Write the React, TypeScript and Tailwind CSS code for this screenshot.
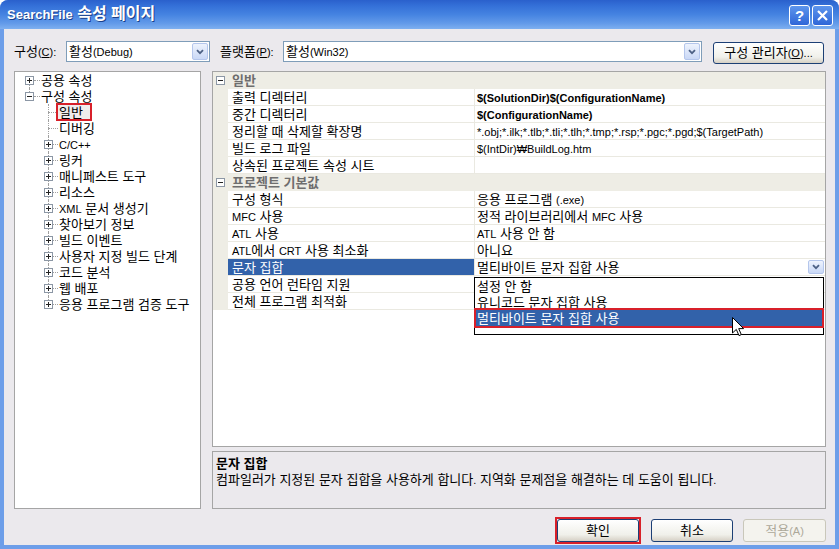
import React from 'react';

const FONT = "font-['Liberation_Sans','Noto_Sans_CJK_KR',sans-serif]";

function T({ t, ko = 'text-[13px]', la = 'text-[11px]' }: { t: string; ko?: string; la?: string }) {
  const parts = t.split(/([\uAC00-\uD7A3 ]+)/).filter((p) => p.length > 0);
  return (
    <>
      {parts.map((p, i) =>
        /[\uAC00-\uD7A3]/.test(p) ? (
          <span key={i} className={ko}>
            {p}
          </span>
        ) : (
          <span key={i} className={la}>
            {p}
          </span>
        )
      )}
    </>
  );
}

function ExpBox({ minus }: { minus?: boolean }) {
  return (
    <svg width="9" height="9" viewBox="0 0 9 9" className="block shrink-0">
      <rect x="0.5" y="0.5" width="8" height="8" fill="#fff" stroke="#8c97a5" />
      <path d="M2 4.5h5" stroke="#222" />
      {!minus && <path d="M4.5 2v5" stroke="#222" />}
    </svg>
  );
}

function Chevron() {
  return (
    <svg width="8" height="6" viewBox="0 0 8 6" className="block">
      <path d="M1 1.2 L4 4.2 L7 1.2" fill="none" stroke="#4d6185" strokeWidth="1.8" />
    </svg>
  );
}

function DropBtn({ w = 16, h = 19 }: { w?: number; h?: number }) {
  return (
    <div
      className="flex items-center justify-center rounded-[2px] border border-[#b4c6ec] bg-[linear-gradient(to_bottom,#eef3fd,#c9d8f6)] shrink-0"
      style={{ width: w, height: h }}
    >
      <Chevron />
    </div>
  );
}

type TreeItem = { label: string; level: 0 | 1; exp?: '+' | '-'; boxed?: boolean; last?: boolean };

const tree: TreeItem[] = [
  { label: '공용 속성', level: 0, exp: '+' },
  { label: '구성 속성', level: 0, exp: '-' },
  { label: '일반', level: 1, boxed: true },
  { label: '디버깅', level: 1 },
  { label: 'C/C++', level: 1, exp: '+' },
  { label: '링커', level: 1, exp: '+' },
  { label: '매니페스트 도구', level: 1, exp: '+' },
  { label: '리소스', level: 1, exp: '+' },
  { label: 'XML 문서 생성기', level: 1, exp: '+' },
  { label: '찾아보기 정보', level: 1, exp: '+' },
  { label: '빌드 이벤트', level: 1, exp: '+' },
  { label: '사용자 지정 빌드 단계', level: 1, exp: '+' },
  { label: '코드 분석', level: 1, exp: '+' },
  { label: '웹 배포', level: 1, exp: '+' },
  { label: '응용 프로그램 검증 도구', level: 1, exp: '+', last: true },
];

function TreeRow({ it, idx }: { it: TreeItem; idx: number }) {
  const lineV = 'absolute border-l border-dotted border-[#a0a0a0]';
  const lineH = 'absolute border-t border-dotted border-[#a0a0a0]';
  return (
    <div className="relative h-[16px] leading-[16px] text-black">
      {it.level === 0 && (
        <>
          {idx === 0 && <div className={`${lineV} left-[14px] top-[8px] h-[8px]`} />}
          {idx === 1 && <div className={`${lineV} left-[14px] top-0 h-[8px]`} />}
          <div className={`${lineH} left-[19px] top-[8px] w-[6px]`} />
          <div className="absolute left-[10px] top-[4px]">
            <ExpBox minus={it.exp === '-'} />
          </div>
          <span className="absolute left-[26px] top-0 whitespace-nowrap">
            <T t={it.label} />
          </span>
        </>
      )}
      {it.level === 1 && (
        <>
          <div className={`${lineV} left-[33px] top-0 ${it.last ? 'h-[8px]' : 'h-[16px]'}`} />
          <div className={`${lineH} left-[33px] top-[8px] w-[10px]`} />
          {it.exp && (
            <div className="absolute left-[29px] top-[4px]">
              <ExpBox />
            </div>
          )}
          {it.boxed ? (
            <span className="absolute left-[42px] top-0 h-[16px] w-[34px] pl-[2px] whitespace-nowrap bg-[#efecec] outline-2 outline-[#d8202a] -outline-offset-1">
              <T t={it.label} />
            </span>
          ) : (
            <span className="absolute left-[44px] top-0 whitespace-nowrap">
              <T t={it.label} />
            </span>
          )}
        </>
      )}
    </div>
  );
}

type GridRow =
  | { cat: string }
  | { name: string; value?: string; bold?: boolean; selected?: boolean };

const rows: GridRow[] = [
  { cat: '일반' },
  { name: '출력 디렉터리', value: '$(SolutionDir)$(ConfigurationName)', bold: true },
  { name: '중간 디렉터리', value: '$(ConfigurationName)', bold: true },
  { name: '정리할 때 삭제할 확장명', value: '*.obj;*.ilk;*.tlb;*.tli;*.tlh;*.tmp;*.rsp;*.pgc;*.pgd;$(TargetPath)' },
  { name: '빌드 로그 파일', value: '$(IntDir)₩BuildLog.htm' },
  { name: '상속된 프로젝트 속성 시트', value: '' },
  { cat: '프로젝트 기본값' },
  { name: '구성 형식', value: '응용 프로그램 (.exe)' },
  { name: 'MFC 사용', value: '정적 라이브러리에서 MFC 사용' },
  { name: 'ATL 사용', value: 'ATL 사용 안 함' },
  { name: 'ATL에서 CRT 사용 최소화', value: '아니요' },
  { name: '문자 집합', value: '멀티바이트 문자 집합 사용', selected: true },
  { name: '공용 언어 런타임 지원', value: '' },
  { name: '전체 프로그램 최적화', value: '' },
];

function Grid() {
  return (
    <div className="relative h-[376px] border border-[#a5a5a5] bg-white overflow-hidden">
      {rows.map((r, i) => {
        if ('cat' in r) {
          return (
            <div key={i} className="flex h-[17px] items-center bg-[#eeede5]">
              <div className="w-[15px] flex justify-center">
                <ExpBox minus />
              </div>
              <span className="ml-[4px] text-[13px] font-bold leading-[16px] text-[#6e6e6e]">{r.cat}</span>
            </div>
          );
        }
        return (
          <div key={i} className="flex h-[17px]">
            <div className="w-[15px] bg-[#eeede5]" />
            <div
              className={`w-[247px] border-r border-b border-[#eae9e1] flex items-center pl-[4px] leading-[16px] ${
                r.selected ? 'bg-[#3262aa] text-white' : 'text-black'
              }`}
            >
              <span className="whitespace-nowrap">
                <T t={r.name} />
              </span>
            </div>
            <div className="flex-1 border-b border-[#eae9e1] flex items-center pl-[2px] pr-[1px]">
              <span className={`whitespace-nowrap text-black leading-[16px] ${r.bold ? 'font-bold' : ''}`}>
                {r.value ? <T t={r.value} /> : null}
              </span>
              {r.selected && (
                <div className="ml-auto">
                  <DropBtn w={16} h={14} />
                </div>
              )}
            </div>
          </div>
        );
      })}

      {/* dropdown list */}
      <div className="absolute left-[261px] top-[205px] w-[350px] h-[58px] border border-black bg-white leading-[16px]">
        <div className="h-[16px] pl-[2px]">
          <T t="설정 안 함" />
        </div>
        <div className="h-[16px] pl-[2px]">
          <T t="유니코드 문자 집합 사용" />
        </div>
        <div className="h-[16px] pl-[2px] bg-[#3262aa] text-white">
          <T t="멀티바이트 문자 집합 사용" />
        </div>
        <div className="absolute left-[-1px] top-[30px] w-[350px] h-[20px] border-2 border-[#d8202a]" />
        <svg width="13" height="20" viewBox="0 0 13 20" className="absolute left-[257px] top-[39px]">
          <path
            d="M0.5 0.5 L0.5 16 L4.3 12.4 L7 18.6 L9.3 17.6 L6.7 11.6 L11.6 11.6 Z"
            fill="#fff"
            stroke="#000"
            strokeWidth="1"
          />
        </svg>
      </div>
    </div>
  );
}

function Btn({ label, disabled, red }: { label: string; disabled?: boolean; red?: boolean }) {
  const inner = (
    <div
      className={`flex h-[23px] items-center justify-center rounded-[3px] border leading-[16px] ${
        disabled
          ? 'w-[83px] border-[#c9c7ba] bg-[#f4f3ee] text-[#aca899]'
          : 'w-[82px] border-[#1c3f75] bg-[linear-gradient(to_bottom,#ffffff,#f0f0ea_70%,#d6d0c5)] text-black'
      }`}
    >
      <T t={label} />
    </div>
  );
  if (red) {
    return <div className="border-2 border-[#d8202a]">{inner}</div>;
  }
  return inner;
}

export default function App() {
  return (
    <div className={`${FONT} w-[839px] h-[549px] flex flex-col bg-[#6d9ee9] rounded-t-[8px] overflow-hidden`}>
      {/* Title bar */}
      <div className="h-[29px] shrink-0 flex items-center pl-[7px] pr-[6px] bg-[linear-gradient(to_bottom,#2a60cc_0%,#3470d8_20%,#4583e1_50%,#629ae9_80%,#7eb0f0_100%)]">
        <span className="text-white font-bold leading-[18px] [text-shadow:1px_1px_0_#1a3f8a] whitespace-nowrap">
          <T t="SearchFile 속성 페이지" ko="text-[16px]" la="text-[13px]" />
        </span>
        <div className="ml-auto flex gap-[2px] pt-[1px]">
          <div className="w-[21px] h-[21px] rounded-[3px] border border-white bg-[linear-gradient(to_bottom,#5d95ec,#2e66d8)] flex items-center justify-center text-white font-bold text-[15px] leading-none">
            ?
          </div>
          <div className="w-[21px] h-[21px] rounded-[3px] border border-white bg-[linear-gradient(to_bottom,#5d95ec,#2e66d8)] flex items-center justify-center">
            <svg width="13" height="13" viewBox="0 0 13 13">
              <path d="M2 2 L11 11 M11 2 L2 11" stroke="#fff" strokeWidth="2.2" />
            </svg>
          </div>
        </div>
      </div>

      {/* Body */}
      <div className="flex-1 mx-[4px] mb-[4px] bg-[#ebe9ed] flex flex-col pl-[10px] pr-[9px] text-black">
        {/* toolbar */}
        <div className="mt-[12px] h-[21px] flex items-center leading-[16px]">
          <span className="w-[52px] whitespace-nowrap">
            <T t="구성(" />
            <span className="text-[11px] underline">C</span>
            <span className="text-[11px]">):</span>
          </span>
          <div className="w-[144px] h-[21px] border border-[#7f9db9] bg-white flex items-center pl-[2px] pr-[1px]">
            <span className="whitespace-nowrap">
              <T t="활성(Debug)" />
            </span>
            <div className="ml-auto">
              <DropBtn w={16} h={17} />
            </div>
          </div>
          <span className="ml-[10px] w-[63px] whitespace-nowrap">
            <T t="플랫폼(" />
            <span className="text-[11px] underline">P</span>
            <span className="text-[11px]">):</span>
          </span>
          <div className="w-[419px] h-[21px] border border-[#7f9db9] bg-white flex items-center pl-[2px] pr-[1px]">
            <span className="whitespace-nowrap">
              <T t="활성(Win32)" />
            </span>
            <div className="ml-auto">
              <DropBtn w={16} h={17} />
            </div>
          </div>
          <div className="ml-[11px] w-[111px] h-[22px] mt-[2px] rounded-[3px] border border-[#1c3f75] bg-[linear-gradient(to_bottom,#ffffff,#f0f0ea_70%,#d6d0c5)] flex items-center justify-center whitespace-nowrap">
            <T t="구성 관리자(" />
            <span className="text-[11px] underline">O</span>
            <span className="text-[11px]">)...</span>
          </div>
        </div>

        {/* main */}
        <div className="mt-[9px] flex gap-[11px]">
          <div className="w-[187px] h-[438px] border border-[#a5a5a5] bg-white">
            {tree.map((it, i) => (
              <TreeRow key={i} it={it} idx={i} />
            ))}
          </div>
          <div className="w-[614px] flex flex-col">
            <Grid />
            <div className="mt-[4px] h-[58px] border border-[#a5a5a5] px-[3px] pt-[3px] leading-[15px]">
              <div className="font-bold">
                <T t="문자 집합" />
              </div>
              <div className="whitespace-nowrap">
                <T t="컴파일러가 지정된 문자 집합을 사용하게 합니다. 지역화 문제점을 해결하는 데 도움이 됩니다." />
              </div>
            </div>
          </div>
        </div>

        {/* buttons */}
        <div className="mt-[8px] flex items-center justify-end">
          <Btn red label="확인" />
          <div className="ml-[10px]">
            <Btn label="취소" />
          </div>
          <div className="ml-[10px]">
            <Btn disabled label="적용(A)" />
          </div>
        </div>
      </div>
    </div>
  );
}
